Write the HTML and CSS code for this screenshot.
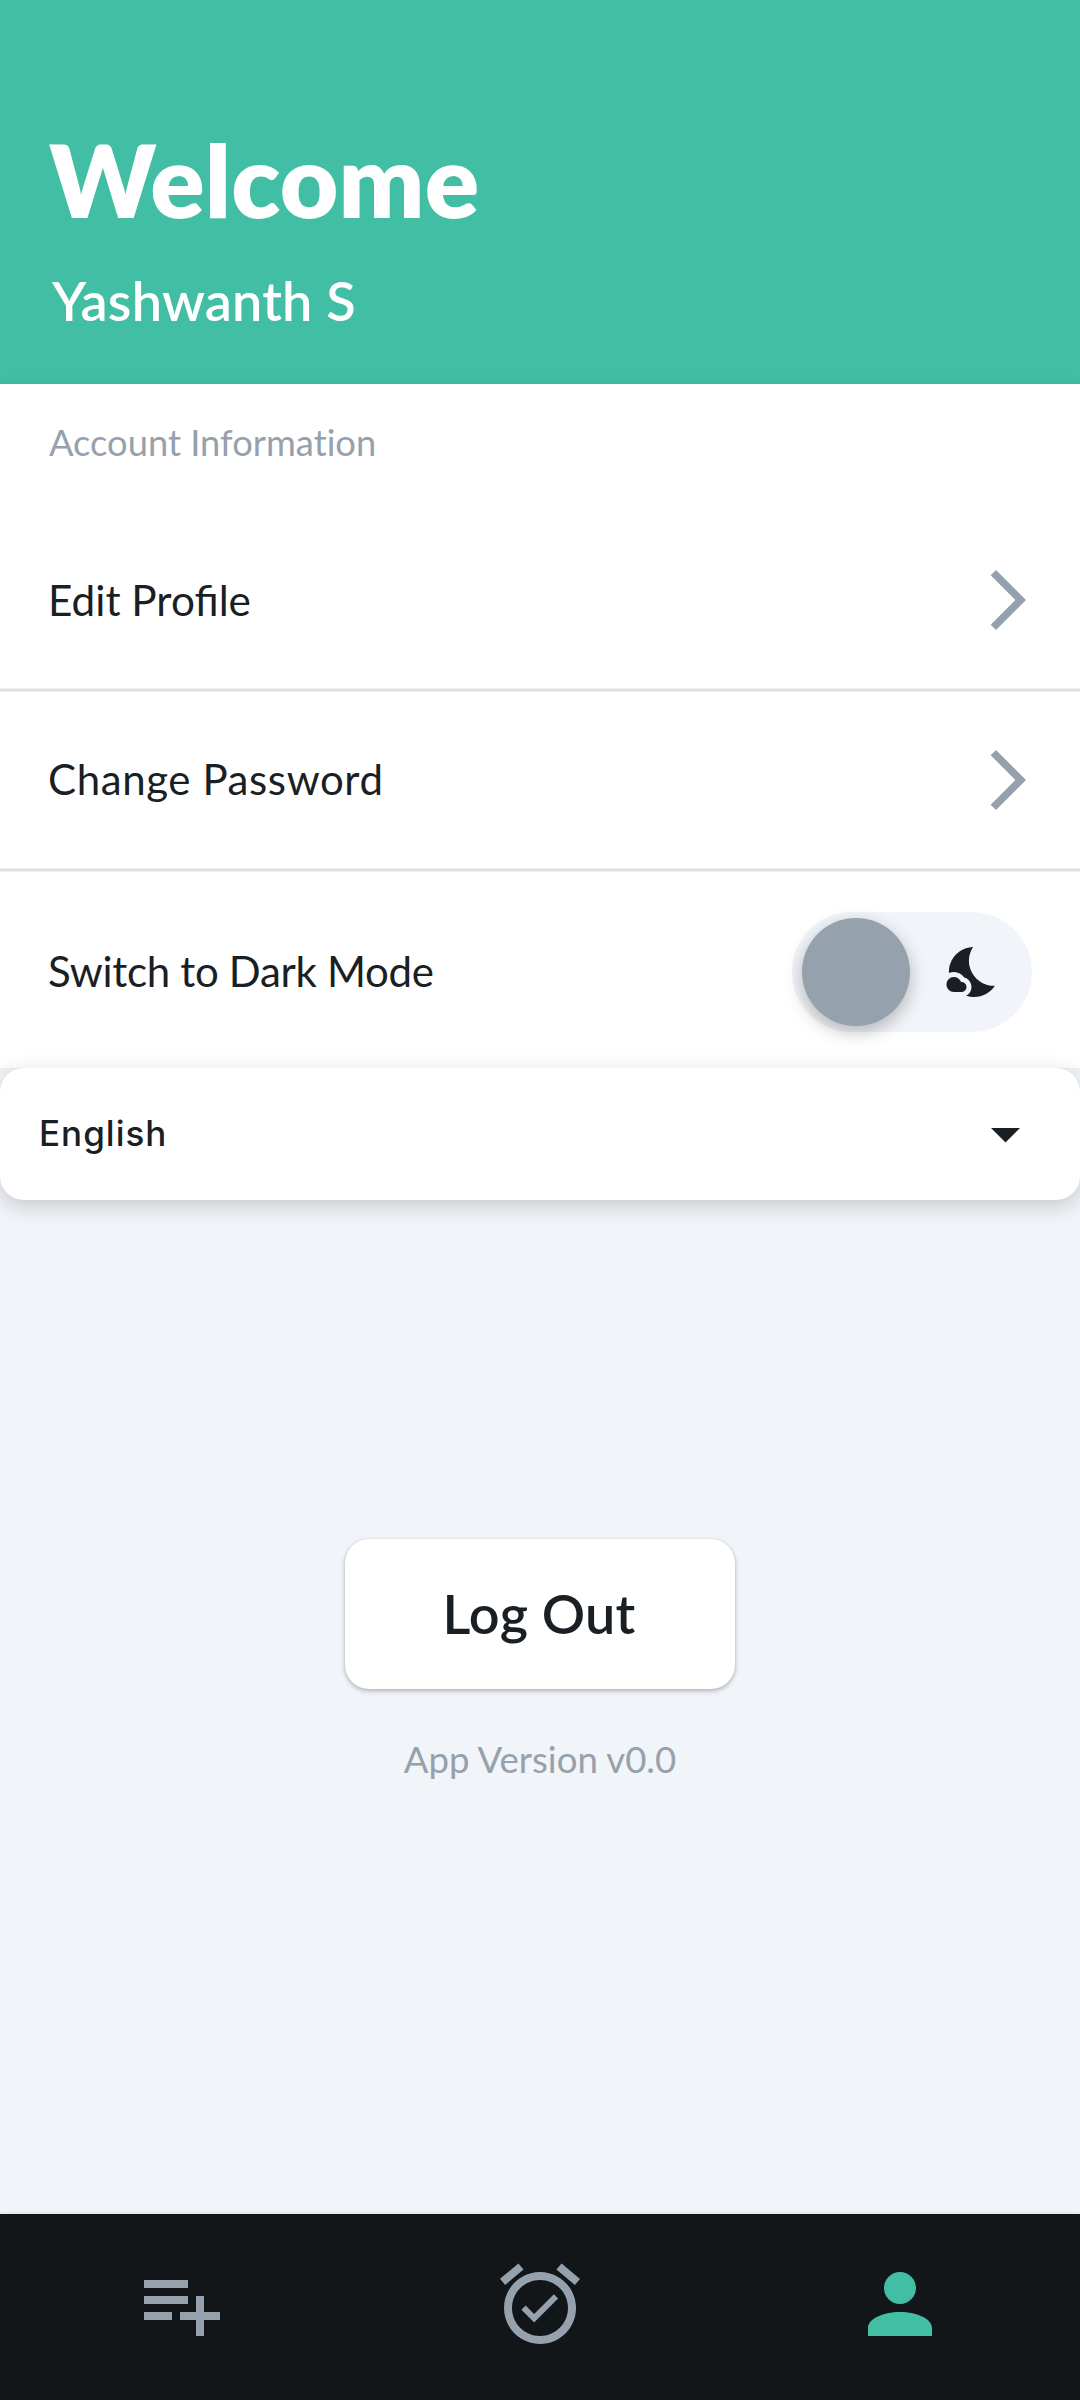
FILE: index.html
```
<!DOCTYPE html>
<html lang="en">
<head>
<meta charset="utf-8">
<title>Profile</title>
<link rel="stylesheet" href="styles.css">
</head>
<body>
<div class="screen">
  <header class="header">
    <h1 class="title">Welcome</h1>
    <p class="name">Yashwanth S</p>
  </header>
  <main class="content">
    <section class="panel">
      <h2 class="section-title">Account Information</h2>
      <a class="row">
        <span class="label label-edit">Edit Profile</span>
        <svg class="chevron" viewBox="0 0 24 24"><path d="M6.23 20.23L8 22l10-10L8 2 6.23 3.77 14.46 12z"/></svg>
      </a>
      <div class="divider"></div>
      <a class="row">
        <span class="label label-password">Change Password</span>
        <svg class="chevron" viewBox="0 0 24 24"><path d="M6.23 20.23L8 22l10-10L8 2 6.23 3.77 14.46 12z"/></svg>
      </a>
      <div class="divider"></div>
      <div class="row row-toggle">
        <span class="label label-mode">Switch to Dark Mode</span>
        <div class="toggle">
          <span class="knob"></span>
          <svg class="moon" viewBox="0 0 24 24"><path d="M11.1 12.08c-2.33-4.51-.5-8.48.53-10.07C6.27 2.2 1.98 6.59 1.98 12c0 .14.02.28.02.42.62-.27 1.29-.42 2-.42 1.66 0 3.18.83 4.1 2.15 1.67.48 2.9 2.02 2.9 3.85 0 1.52-.87 2.83-2.12 3.51.98.32 2.03.5 3.11.5 3.5 0 6.58-1.8 8.37-4.52-2.36.23-6.98-.97-9.26-5.41z"/><path d="M7 16h-.18C6.4 14.84 5.3 14 4 14c-1.66 0-3 1.34-3 3s1.34 3 3 3h3c1.1 0 2-.9 2-2s-.9-2-2-2z"/></svg>
        </div>
      </div>
    </section>
    <div class="language">
      <span class="language-value">English</span>
      <svg class="caret" viewBox="0 0 29 15"><path d="M0 0h29L14.5 14.5z"/></svg>
    </div>
    <button class="logout">Log Out</button>
    <p class="version">App Version v0.0</p>
  </main>
  <nav class="nav">
    <svg class="nav-icon" viewBox="0 0 24 24"><path d="M14 10H3v2h11v-2zm0-4H3v2h11V6zm4 8v-4h-2v4h-4v2h4v4h2v-4h4v-2h-4zM3 16h7v-2H3v2z"/></svg>
    <svg class="nav-icon" viewBox="0 0 24 24"><path d="M22 5.72l-4.6-3.86-1.29 1.53 4.6 3.86L22 5.72zM7.88 3.39L6.6 1.86 2 5.71l1.29 1.53 4.59-3.85zM12 4c-4.97 0-9 4.03-9 9s4.02 9 9 9c4.97 0 9-4.03 9-9s-4.03-9-9-9zm0 16c-3.87 0-7-3.13-7-7s3.13-7 7-7 7 3.13 7 7-3.13 7-7 7zm-1.46-5.47L8.41 12.4l-1.06 1.06 3.18 3.18 6-6-1.06-1.06-4.93 4.95z"/></svg>
    <svg class="nav-icon active" viewBox="0 0 24 24"><path d="M12 12c2.21 0 4-1.79 4-4s-1.79-4-4-4-4 1.79-4 4 1.79 4 4 4zM12 14c-4.42 0-8 1.79-8 4v2h16v-2c0-2.21-3.58-4-8-4z"/></svg>
  </nav>
</div>
</body>
</html>
```
FILE: styles.css
```
* { box-sizing: border-box; }
body {
  margin: 0;
  font-family: Lato, "Liberation Sans", sans-serif;
  color: #1a1f24;
}
h1, h2, p { margin: 0; font-weight: 400; }
.screen {
  width: 1080px;
  height: 2400px;
  display: flex;
  flex-direction: column;
  background: #f1f4f8;
  overflow: hidden;
}
.header {
  height: 384px;
  padding: 119px 49px 0;
  background: #42bea5;
  color: #fff;
}
.title {
  font-size: 101px;
  font-weight: 800;
  line-height: 120px;
  letter-spacing: 0.2px;
}
.name {
  margin-top: 32px;
  padding-left: 3px;
  font-size: 54px;
  font-weight: 600;
  line-height: 60px;
  letter-spacing: 0.2px;
}
.content {
  flex: 1;
  display: flex;
  flex-direction: column;
  align-items: center;
}
.panel {
  width: 100%;
  height: 684px;
  background: #fff;
  box-shadow: 0 -2px 10px rgba(0, 0, 0, 0.06);
}
.section-title {
  height: 126px;
  padding: 38px 49px 0;
  font-size: 36.3px;
  line-height: 40px;
  color: #95a1ac;
  font-variant-ligatures: none;
}
.row {
  height: 178px;
  padding: 2px 36px 0 48px;
  display: flex;
  align-items: center;
  justify-content: space-between;
}
.divider {
  height: 4px;
  background: #dbe2e7;
  border-top: 1px solid #edf1f3;
  border-bottom: 1px solid #edf1f3;
}
.divider + .row { height: 176px; padding-top: 0; }
.label {
  padding-bottom: 2px;
  font-size: 42px;
  white-space: nowrap;
}
.label-edit { font-size: 42.3px; }
.label-password { letter-spacing: 0.6px; }
.label-mode { letter-spacing: -0.3px; }
.chevron {
  width: 72px;
  height: 72px;
  fill: #95a1ac;
}
.divider + .row-toggle {
  height: 196px;
  padding: 4px 48px 0;
}
.toggle {
  width: 240px;
  height: 120px;
  padding: 0 28px 0 10px;
  border-radius: 60px;
  background: #f1f4f8;
  display: flex;
  align-items: center;
  justify-content: space-between;
}
.knob {
  width: 108px;
  height: 108px;
  border-radius: 50%;
  background: #95a1ac;
  box-shadow: 0 6px 18px rgba(0, 0, 0, 0.26);
}
.moon {
  width: 60px;
  height: 60px;
  fill: #1a1f24;
}
.language {
  position: relative;
  width: 100%;
  height: 132px;
  padding: 0 60px 0 39px;
  border-radius: 24px;
  background: #fff;
  box-shadow: 0 6px 22px rgba(0, 0, 0, 0.18);
  display: flex;
  align-items: center;
  justify-content: space-between;
}
.language-value {
  padding-bottom: 3px;
  font-family: Inter, "Liberation Sans", sans-serif;
  font-size: 35px;
  font-weight: 500;
  letter-spacing: 1px;
}
.caret {
  width: 29px;
  height: 15px;
  margin-top: 3px;
  fill: #1a1f24;
}
.logout {
  width: 390px;
  height: 150px;
  margin-top: 339px;
  padding: 0 2px 2px 0;
  border: 0;
  border-radius: 24px;
  background: #fff;
  box-shadow: 0 2px 5px rgba(0, 0, 0, 0.26), 0 0 2px rgba(0, 0, 0, 0.1);
  font: 600 54px Lato, "Liberation Sans", sans-serif;
  letter-spacing: 0.2px;
  color: #1a1f24;
}
.version {
  margin-top: 50px;
  font-size: 36.6px;
  line-height: 40px;
  color: #95a1ac;
}
.nav {
  height: 186px;
  padding: 42px 0 48px;
  background: #121619;
  box-shadow: 0 0 5px rgba(0, 0, 0, 0.12);
  display: grid;
  grid-template-columns: repeat(3, 360px);
  justify-items: center;
}
.nav-icon {
  width: 96px;
  height: 96px;
  fill: #95a1ac;
}
.nav-icon.active { fill: #42bea5; }
```
